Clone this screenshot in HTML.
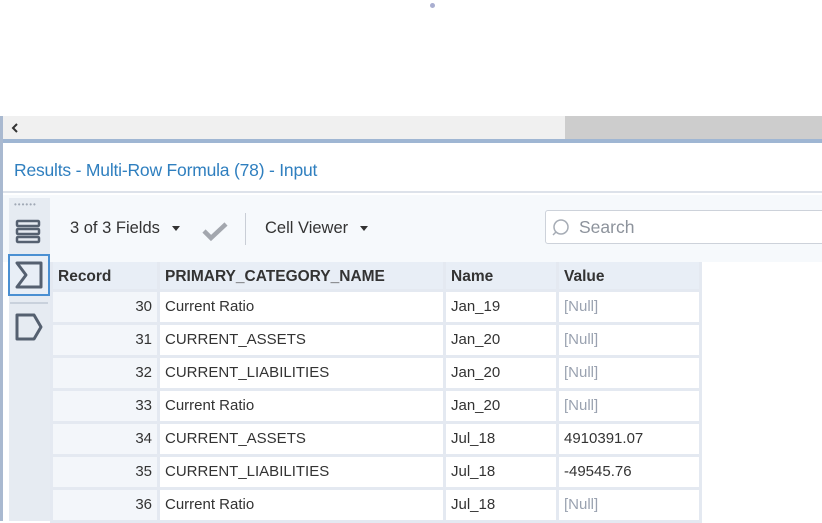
<!DOCTYPE html>
<html><head><meta charset="utf-8"><style>
*{margin:0;padding:0;box-sizing:border-box}
body{width:822px;height:521px;overflow:hidden;background:#fff;font-family:"Liberation Sans","DejaVu Sans",sans-serif;position:relative}
.abs{position:absolute}
td{font-size:15px;color:#333;height:33px;border:3px solid #e4e9f1;padding:0 5px;white-space:nowrap;overflow:hidden;background:#fff}
table{border-collapse:collapse;position:absolute;left:50px;top:262px;table-layout:fixed}
th{font-size:15.5px;font-weight:bold;color:#333;text-align:left;height:28px;padding:4px 5px 0;background:#e8eef6;border:3px solid #e4e9f1;border-top:none}
td.r{text-align:right;background:#f3f6fa}
td.n{color:#9aa2b0}
.dd{display:inline-block;width:0;height:0;border-left:4px solid transparent;border-right:4px solid transparent;border-top:5px solid #333;vertical-align:middle;margin-left:12px}
</style></head><body>
<div class="abs" style="left:430px;top:3px;width:5px;height:5px;border-radius:50%;background:#a9aed0"></div>
<div class="abs" style="left:0;top:116px;width:822px;height:23px;background:#f0f0f0"></div>
<div class="abs" style="left:565px;top:116px;width:257px;height:23px;background:#cdcdcd"></div>
<svg class="abs" style="left:9px;top:121px" width="12" height="14"><path d="M8 3 L4 7 L8 11" fill="none" stroke="#333" stroke-width="2"/></svg>
<div class="abs" style="left:0;top:116px;width:3px;height:405px;background:#a9b9d0"></div>
<div class="abs" style="left:3px;top:139px;width:819px;height:4px;background:#9fb6d3"></div>
<div class="abs" style="left:3px;top:143px;width:819px;height:50px;background:#fff;border-bottom:2px solid #dde2ea"></div>
<div class="abs" style="left:14px;top:160px;font-size:17.5px;color:#2f7fbf;letter-spacing:-0.2px">Results - Multi-Row Formula (78) - Input</div>
<div class="abs" style="left:3px;top:195px;width:819px;height:67px;background:#f6f9fc"></div>
<div class="abs" style="left:9px;top:198px;width:41px;height:323px;background:#e6ebf2"></div>
<div class="abs" style="left:14px;top:200px;font-size:8px;color:#a0a8b5;letter-spacing:1px">••••••</div>
<svg class="abs" style="left:14px;top:218px" width="28" height="28"><g fill="none" stroke="#556070" stroke-width="2.5"><rect x="3" y="3" width="22" height="5" rx="1"/><rect x="3" y="11" width="22" height="5" rx="1"/><rect x="3" y="19" width="22" height="5" rx="1"/></g></svg>
<div class="abs" style="left:8px;top:254px;width:42px;height:42px;border:2px solid #4a8fd2;background:#e8eef6"></div>
<svg class="abs" style="left:13px;top:259px" width="32" height="32"><path d="M4 4 H28 V28 H4 L13 16 Z" fill="none" stroke="#556070" stroke-width="3" stroke-linejoin="round"/></svg>
<div class="abs" style="left:10px;top:302px;width:38px;height:2px;background:#c9d1dc"></div>
<svg class="abs" style="left:13px;top:311px" width="32" height="32"><path d="M4 4 H21 L28 16 L21 28 H4 Z" fill="none" stroke="#556070" stroke-width="3" stroke-linejoin="round"/></svg>
<div class="abs" style="left:70px;top:219px;font-size:16.5px;color:#333">3 of 3 Fields<span class="dd"></span></div>
<svg class="abs" style="left:200px;top:219px" width="30" height="24"><path d="M4 12 L11 19 L26 5" fill="none" stroke="#a3a7ae" stroke-width="4.5"/></svg>
<div class="abs" style="left:245px;top:213px;width:1px;height:32px;background:#c9ced6"></div>
<div class="abs" style="left:265px;top:219px;font-size:16.5px;color:#333">Cell Viewer<span class="dd"></span></div>
<div class="abs" style="left:545px;top:210px;width:290px;height:34px;border:1px solid #cdd2da;border-radius:3px;background:#fff"></div>
<svg class="abs" style="left:550px;top:217px" width="22" height="22"><circle cx="11" cy="10" r="7" fill="none" stroke="#a6acb5" stroke-width="1.5"/><path d="M6 15 L3 18" stroke="#a6acb5" stroke-width="1.5"/></svg>
<div class="abs" style="left:579px;top:217px;font-size:17.5px;color:#8d939c">Search</div>
<table>
<colgroup><col style="width:107px"><col style="width:286px"><col style="width:113px"><col style="width:143px"></colgroup>
<tr><th>Record</th><th>PRIMARY_CATEGORY_NAME</th><th>Name</th><th>Value</th></tr>
<tr><td class="r">30</td><td>Current Ratio</td><td>Jan_19</td><td class="n">[Null]</td></tr>
<tr><td class="r">31</td><td>CURRENT_ASSETS</td><td>Jan_20</td><td class="n">[Null]</td></tr>
<tr><td class="r">32</td><td>CURRENT_LIABILITIES</td><td>Jan_20</td><td class="n">[Null]</td></tr>
<tr><td class="r">33</td><td>Current Ratio</td><td>Jan_20</td><td class="n">[Null]</td></tr>
<tr><td class="r">34</td><td>CURRENT_ASSETS</td><td>Jul_18</td><td>4910391.07</td></tr>
<tr><td class="r">35</td><td>CURRENT_LIABILITIES</td><td>Jul_18</td><td>-49545.76</td></tr>
<tr><td class="r">36</td><td>Current Ratio</td><td>Jul_18</td><td class="n">[Null]</td></tr>
</table>
</body></html>
